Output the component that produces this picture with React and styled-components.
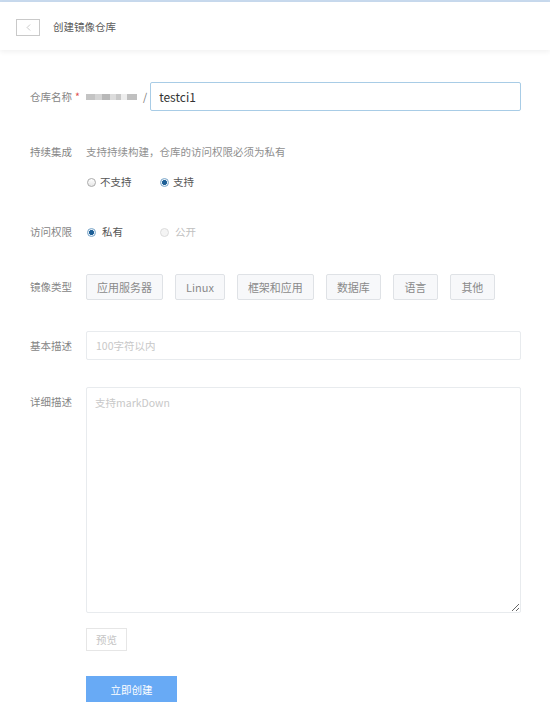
import React from "react";
import styled, { createGlobalStyle } from "styled-components";
import { ChevronLeft } from "lucide-react";

const GlobalStyle = createGlobalStyle`
  body {
    margin: 0;
    background: #fff;
    font-family: "Noto Sans CJK SC", "Liberation Sans", sans-serif;
    font-size: 10.5px;
    color: #808080;
  }
  * { box-sizing: border-box; }
`;

const imageTypes = ["应用服务器", "Linux", "框架和应用", "数据库", "语言", "其他"];
// blurred owner name, drawn as grey blocks
const ownerBlocks = [
  [9, "#c4c4c4"],
  [7, "#d4d4d4"],
  [8, "#b8b8b8"],
  [6, "#dcdcdc"],
  [5, "#c8c8c8"],
  [6, "#eeeeee"],
  [10, "#c0c0c0"],
];

const App = () => {
  return (
    <>
      <GlobalStyle />
      <Page>
        <Header>
          <BackButton>
            <ChevronLeft size={11} strokeWidth={1.2} color="#a0a0a0" />
          </BackButton>
          <Title>创建镜像仓库</Title>
        </Header>

        <Form>
          <Row $mt={32} $align="center">
            <Label>
              仓库名称<Star>*</Star>
            </Label>
            <Owner>
              {ownerBlocks.map(([w, c], i) => (
                <Block key={i} $w={w} $c={c} />
              ))}
            </Owner>
            <Slash>/</Slash>
            <NameInput defaultValue="testci1" />
          </Row>

          <Row $mt={31}>
            <Label>持续集成</Label>
            <Column>
              <Hint>支持持续构建，仓库的访问权限必须为私有</Hint>
              <RadioGroup>
                <RadioItem>
                  <RadioDot />
                  不支持
                </RadioItem>
                <RadioItem>
                  <RadioDot $checked />
                  支持
                </RadioItem>
              </RadioGroup>
            </Column>
          </Row>

          <Row $mt={30} $align="center">
            <Label>访问权限</Label>
            <RadioGroup>
              <RadioItem>
                <RadioDot $checked />
                <RadioText>私有</RadioText>
              </RadioItem>
              <RadioItem $disabled>
                <RadioDot $disabled />
                <RadioText>公开</RadioText>
              </RadioItem>
            </RadioGroup>
          </Row>

          <Row $mt={32} $align="center">
            <Label>镜像类型</Label>
            <TypeList>
              {imageTypes.map((t) => (
                <TypeButton key={t}>{t}</TypeButton>
              ))}
            </TypeList>
          </Row>

          <Row $mt={31} $align="center">
            <Label>基本描述</Label>
            <TextField placeholder="100字符以内" />
          </Row>

          <Row $mt={27}>
            <Label $top>详细描述</Label>
            <TextArea placeholder="支持markDown" />
          </Row>

          <Row $mt={15}>
            <Label />
            <PreviewButton>预览</PreviewButton>
          </Row>

          <Row $mt={25}>
            <Label />
            <SubmitButton>立即创建</SubmitButton>
          </Row>
        </Form>
      </Page>
    </>
  );
};
export default App;

const Page = styled.div`
  border-top: 2px solid #c8daee;
  min-height: 706px;
`;

const Header = styled.header`
  display: flex;
  align-items: center;
  height: 48px;
  padding-left: 16px;
  background: #fff;
  box-shadow: 0 2px 5px rgba(0, 0, 0, 0.06);
`;

const BackButton = styled.button`
  display: flex;
  align-items: center;
  justify-content: center;
  width: 24px;
  height: 17px;
  padding: 0;
  margin-top: 2px;
  border: 1px solid #c9c9c9;
  background: #fff;
`;

const Title = styled.h1`
  margin: 0 0 0 13px;
  font-size: 10.5px;
  font-weight: normal;
  color: #5a5a5a;
`;

const Form = styled.div`
  display: flex;
  flex-direction: column;
  padding: 0 29px 0 30px;
`;

const Row = styled.div`
  display: flex;
  align-items: ${(p) => (p.$align === "center" ? "center" : "flex-start")};
  margin-top: ${(p) => p.$mt}px;
`;

const Label = styled.div`
  flex: 0 0 56px;
  line-height: 20px;
  color: #858585;
  white-space: nowrap;
  padding-top: ${(p) => (p.$top ? "5px" : "0")};
`;

const Star = styled.span`
  color: #e05050;
  margin-left: 3px;
`;

const Owner = styled.span`
  display: flex;
  align-items: center;
  width: 54px;
  height: 6px;
  filter: blur(0.5px);
`;

const Block = styled.span`
  width: ${(p) => p.$w}px;
  height: 6px;
  background: ${(p) => p.$c};
`;

const Slash = styled.span`
  margin: 0 3px 0 3px;
  color: #777;
`;

const NameInput = styled.input`
  flex: 1;
  height: 29px;
  padding: 0 8px;
  border: 1px solid #a8cce6;
  border-radius: 2px;
  outline: none;
  font-family: "Noto Sans CJK SC", "Liberation Sans", sans-serif;
  font-size: 12px;
  color: #333;
`;

const Column = styled.div`
  display: flex;
  flex-direction: column;
  gap: 10px;
`;

const Hint = styled.div`
  line-height: 20px;
  color: #8f8f8f;
`;

const RadioGroup = styled.div`
  display: flex;
  align-items: center;
  padding-left: 1px;
  line-height: 20px;
`;

const RadioItem = styled.label`
  display: flex;
  align-items: center;
  gap: 4px;
  min-width: 73px;
  color: ${(p) => (p.$disabled ? "#c0c0c0" : "#555")};
`;

const RadioText = styled.span`
  margin-left: 2px;
`;

const RadioDot = styled.span`
  width: 9px;
  height: 9px;
  border-radius: 50%;
  border: 1px solid ${(p) => (p.$checked ? "#7aa6c9" : p.$disabled ? "#dcdcdc" : "#aaa")};
  background: ${(p) =>
    p.$checked
      ? "radial-gradient(circle, #1d5f96 0 2.2px, #e9f1f8 2.8px)"
      : p.$disabled
      ? "#f4f4f4"
      : "linear-gradient(#fff, #e6e6e6)"};
`;

const TypeList = styled.div`
  display: flex;
  gap: 12px;
`;

const TypeButton = styled.button`
  height: 26px;
  min-width: 45px;
  padding: 0 10px;
  border: 1px solid #dfe2e6;
  background: #f7f8fa;
  border-radius: 2px;
  font-family: "Noto Sans CJK SC", "Liberation Sans", sans-serif;
  font-size: 11px;
  color: #8a8a8a;
`;

const TextField = styled.input`
  flex: 1;
  height: 29px;
  padding: 0 9px;
  border: 1px solid #e8ebee;
  border-radius: 2px;
  outline: none;
  font-family: "Noto Sans CJK SC", "Liberation Sans", sans-serif;
  font-size: 10.5px;
  &::placeholder { color: #c8c8c8; }
`;

const TextArea = styled.textarea`
  flex: 1;
  height: 226px;
  padding: 7px 8px;
  border: 1px solid #e8ebee;
  border-radius: 2px;
  outline: none;
  font-family: "Noto Sans CJK SC", "Liberation Sans", sans-serif;
  font-size: 10.5px;
  &::placeholder { color: #c8c8c8; }
`;

const PreviewButton = styled.button`
  width: 41px;
  height: 23px;
  padding: 0;
  border: 1px solid #e6e6e6;
  background: #fff;
  font-family: "Noto Sans CJK SC", "Liberation Sans", sans-serif;
  font-size: 10.5px;
  color: #c4c4c4;
`;

const SubmitButton = styled.button`
  width: 91px;
  height: 26px;
  border: none;
  background: #68aaf5;
  font-family: "Noto Sans CJK SC", "Liberation Sans", sans-serif;
  font-size: 10.5px;
  color: #fff;
`;
